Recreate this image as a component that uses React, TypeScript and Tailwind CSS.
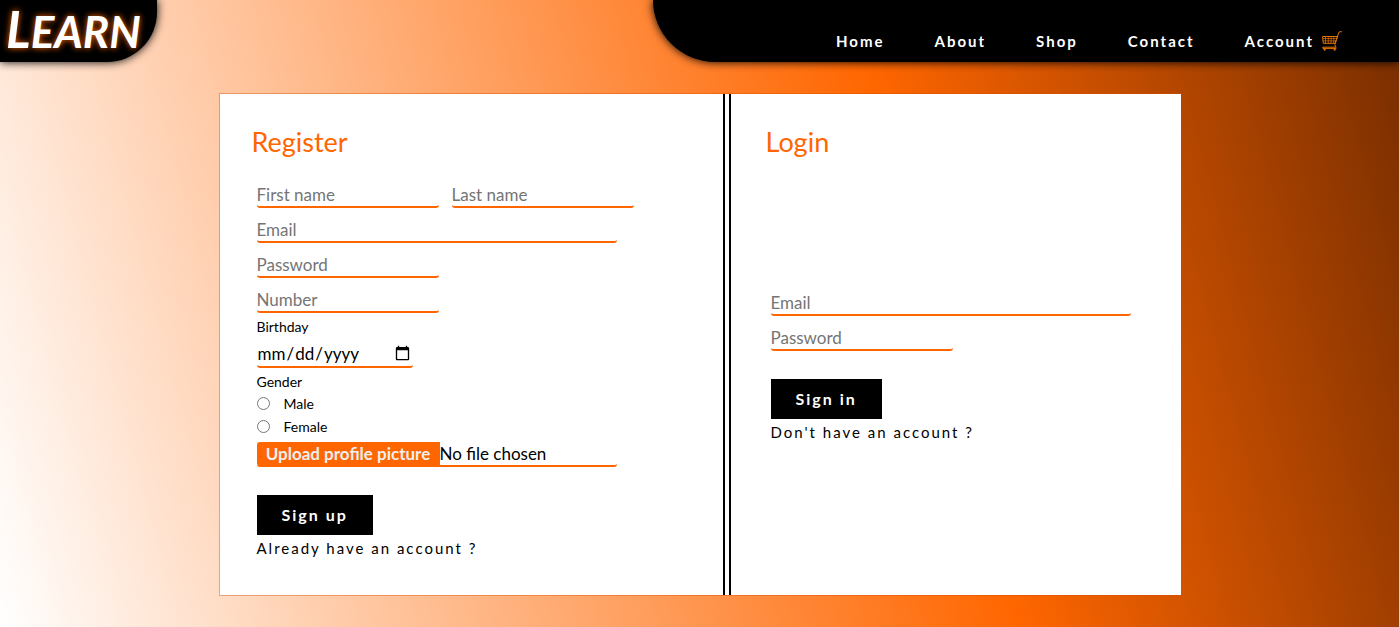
import type { InputHTMLAttributes, ReactNode } from "react";

const NAV_LINKS = ["Home", "About", "Shop", "Contact"];

function CartIcon() {
  return (
    <svg viewBox="0 0 20 20" className="size-5" fill="none" stroke="#e87400" strokeWidth="1" aria-hidden="true">
      <path d="M19.8 .7H18q-1 0-1.4 1.3L12.8 13.8" />
      <path d="M.6 5.5h15L13 12.3H1.2z" />
      <path d="M.8 7.6h14M1 9.9h13M3.5 5.5v6.8M6.3 5.5v6.8M9.1 5.5v6.8M11.8 5.5v6.8" strokeWidth=".7" />
      <path d="M12.8 13.8l1.3 2.4H.8v1.2h13.6" />
      <circle cx="2.6" cy="18.6" r=".7" fill="#e87400" />
      <circle cx="12.7" cy="18.6" r=".7" fill="#e87400" />
    </svg>
  );
}

function Field({ label, className = "", ...rest }: { label: string } & InputHTMLAttributes<HTMLInputElement>) {
  return (
    <input
      aria-label={label}
      placeholder={label}
      className={`block h-[27px] max-w-full rounded-[3px] border-b-2 border-[#ff6600] bg-transparent pt-0.5 text-[17px] leading-6 text-black outline-none placeholder:text-[#757575] ${className}`}
      {...rest}
    />
  );
}

function SubmitButton({ children }: { children: ReactNode }) {
  return (
    <button type="submit" className="mt-7 block h-10 bg-black px-[25px] text-base font-bold tracking-[2px] text-white">
      {children}
    </button>
  );
}

function SwitchLink({ children }: { children: ReactNode }) {
  return (
    <a href="#" className="mt-[3px] block w-fit text-[15px] leading-5 tracking-[2px] text-black">
      {children}
    </a>
  );
}

function GenderOption({ value }: { value: string }) {
  return (
    <label className="flex h-[23px] w-fit items-center gap-3.5 text-sm leading-5">
      <input type="radio" name="gender" value={value} className="size-[13px]" />
      {value}
    </label>
  );
}

export default function App() {
  return (
    <div className="min-h-screen bg-[linear-gradient(75deg,#ffffff_0%,#ff6600_65%,#772d00_100%)] pb-[31px] font-['Lato',sans-serif] text-black">
      <header className="flex h-[62px] justify-between">
        <a
          href="#"
          className="flex w-[157px] items-center rounded-br-[50px] bg-black pb-1.5 pl-1.5 text-[51px] leading-none font-bold text-white italic shadow-[0_0_10px_#000000] [text-shadow:0_0_6px_#ff6600]"
        >
          <span>
            L<span className="text-[44px]">EARN</span>
          </span>
        </a>
        <nav className="flex w-[746px] items-end justify-end gap-[50px] rounded-bl-[62px] bg-black pr-[57px] pb-[9px] text-[15px] font-bold tracking-[2px] text-white shadow-[0_0_10px_#000000]">
          {NAV_LINKS.map((name) => (
            <a key={name} href="#" className="leading-6">
              {name}
            </a>
          ))}
          <a href="#" className="flex items-center gap-2 leading-6">
            Account
            <CartIcon />
          </a>
        </nav>
      </header>

      <main className="mx-auto mt-[31px] flex min-h-[503px] w-[962px] max-w-full border border-r-0 border-[#d24a00]/40 bg-white bg-clip-padding">
        <section className="flex-1 pt-[30px] pl-8">
          <h1 className="text-[27px] leading-9 text-[#ff6600]">Register</h1>
          <form className="mt-[21px] pl-[5px]" onSubmit={(e) => e.preventDefault()}>
            <div className="flex flex-col gap-2">
              <div className="flex gap-[13px]">
                <Field label="First name" className="w-[182px]" />
                <Field label="Last name" className="w-[182px]" />
              </div>
              <Field label="Email" type="email" className="w-[360px]" />
              <Field label="Password" type="password" className="w-[182px]" />
              <Field label="Number" type="tel" className="w-[182px]" />
            </div>
            <label htmlFor="birthday" className="mt-1 block text-sm leading-5">
              Birthday
            </label>
            <input
              id="birthday"
              type="date"
              className="mt-1 block h-[27px] w-[156px] rounded-[3px] border-b-2 border-[#ff6600] text-[17px] leading-6 outline-none"
            />
            <fieldset className="pt-1">
              <legend className="float-left w-full text-sm leading-5">Gender</legend>
              <div className="clear-both">
                <GenderOption value="Male" />
                <GenderOption value="Female" />
              </div>
            </fieldset>
            <input type="file" aria-label="Upload profile picture" className="hidden" id="picture" />
            <label
              htmlFor="picture"
              className="mt-1 flex h-[25px] w-[360px] overflow-hidden rounded-[3px] border-b-2 border-[#ff6600] text-[17px] leading-6"
            >
              <span className="w-[183px] bg-[#ff6600] text-center font-bold text-[#efefef]">Upload profile picture</span>
              <span>No file chosen</span>
            </label>
            <SubmitButton>Sign up</SubmitButton>
            <SwitchLink>Already have an account ?</SwitchLink>
          </form>
        </section>

        <div className="w-2 border-x-2 border-black" />

        <section className="w-[450px] pt-[30px] pl-[35px]">
          <h1 className="text-[27px] leading-9 text-[#ff6600]">Login</h1>
          <form className="mt-[129px] pl-[5px]" onSubmit={(e) => e.preventDefault()}>
            <div className="flex flex-col gap-2">
              <Field label="Email" type="email" className="w-[360px]" />
              <Field label="Password" type="password" className="w-[182px]" />
            </div>
            <SubmitButton>Sign in</SubmitButton>
            <SwitchLink>Don't have an account ?</SwitchLink>
          </form>
        </section>
      </main>
    </div>
  );
}
